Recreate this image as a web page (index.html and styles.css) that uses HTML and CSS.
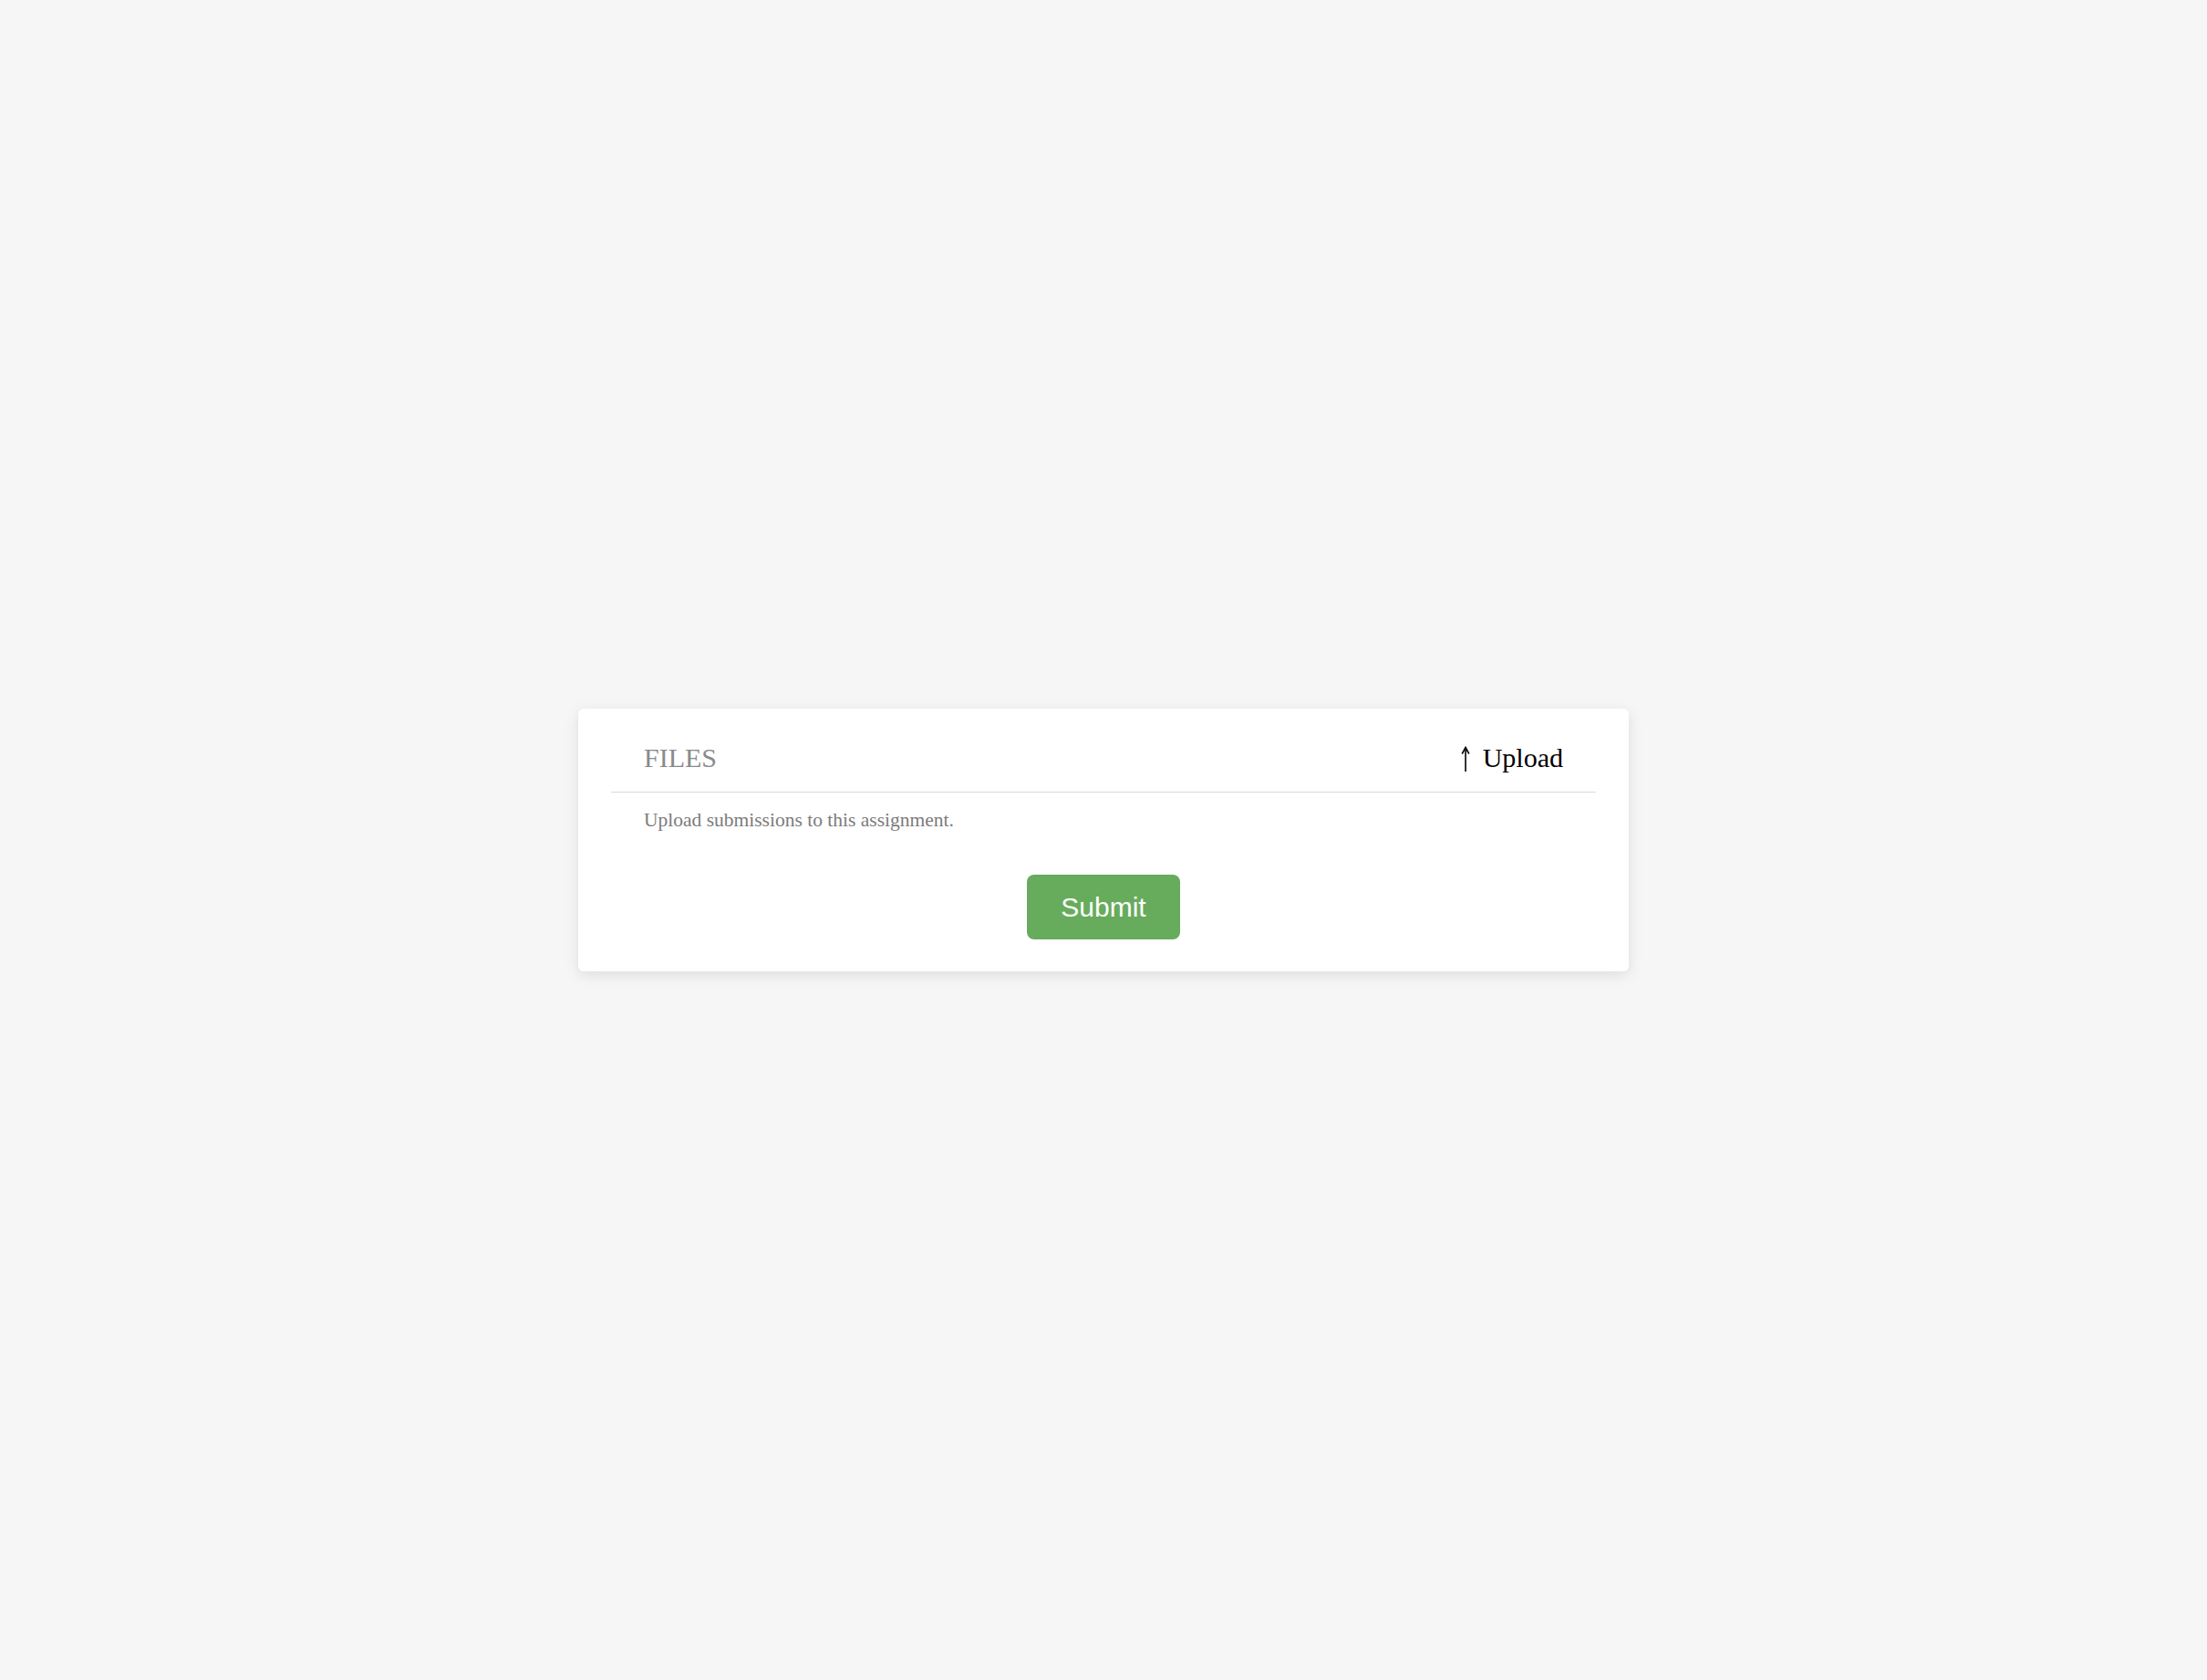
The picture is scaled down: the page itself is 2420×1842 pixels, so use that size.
FILE: index.html
```html
<!DOCTYPE html>
<html>
<head>
  <title>Assignment Files</title>
  <link rel="stylesheet" href="styles.css">
</head>
<body>
  <div class="card">
    <div class="files-header">
      <span class="files-title">FILES</span>
      <a class="upload-link" href="#">
        <svg class="upload-arrow" width="10" height="28" viewBox="0 0 10 28" fill="none" stroke="#000" stroke-width="1.6">
          <path d="M5 1.5V28"/>
          <path d="M1.2 8.5L5 1.5L8.8 8.5"/>
        </svg>
        Upload
      </a>
    </div>
    <p class="files-hint">Upload submissions to this assignment.</p>
    <div class="actions">
      <button type="button" id="submitBtn">Submit</button>
    </div>
  </div>
</body>
</html>
```

FILE: styles.css
```css
body {
  font-family: "Liberation Serif", "Times New Roman", serif;
  margin: 0;
  display: flex;
  justify-content: center;
  align-items: center;
  min-height: 100vh;
  background-color: #f6f6f6;
}

.card {
  background-color: #fff;
  width: 1152px;
  box-sizing: border-box;
  padding: 0 36px 35px;
  border-radius: 6px;
  box-shadow: 0px 4px 16px rgba(0, 0, 0, 0.1);
}

.files-header {
  display: flex;
  justify-content: space-between;
  align-items: baseline;
  padding: 37px 36px 20px;
  border-bottom: 1px solid #dcdcdc;
  font-size: 30px;
  line-height: 34px;
}

.files-title {
  color: #8a8a8a;
}

.upload-link {
  display: flex;
  align-items: baseline;
  gap: 14px;
  color: #000;
  text-decoration: none;
}

.upload-arrow {
  align-self: flex-end;
  margin-bottom: 2px;
}

.files-hint {
  margin: 18px 0 0;
  padding: 0 36px;
  font-size: 21.5px;
  line-height: 24px;
  color: #7c7c7c;
}

.actions {
  display: flex;
  justify-content: center;
  margin-top: 48px;
}

button {
  background-color: #67ac5c;
  border: none;
  color: white;
  padding: 18px 37px;
  font-family: "Liberation Sans", Arial, sans-serif;
  font-size: 30px;
  line-height: 35px;
  border-radius: 8px;
  cursor: pointer;
}
```
